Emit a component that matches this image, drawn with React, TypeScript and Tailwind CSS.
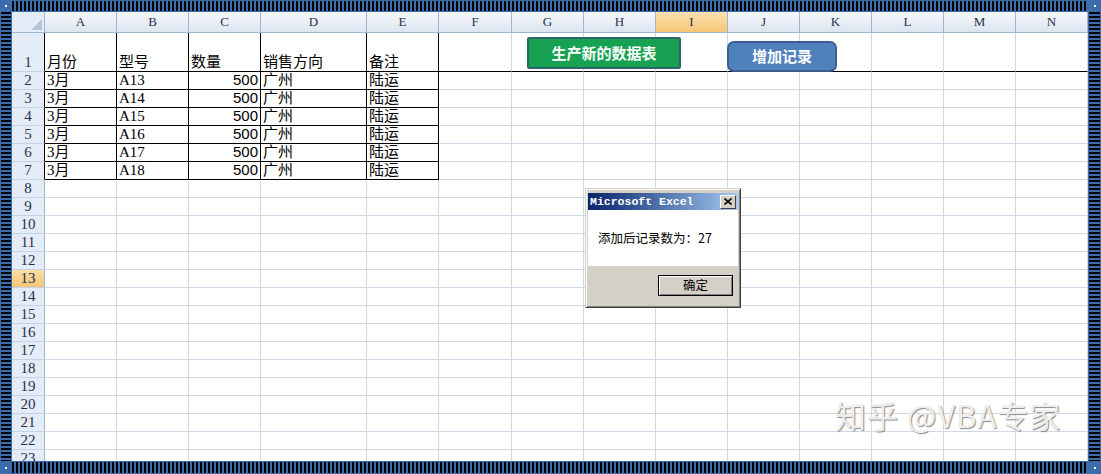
import React from 'react';

const cols = ['A', 'B', 'C', 'D', 'E', 'F', 'G', 'H', 'I', 'J', 'K', 'L', 'M', 'N'];

const data: string[][] = [
  ['月份', '型号', '数量', '销售方向', '备注'],
  ['3月', 'A13', '500', '广州', '陆运'],
  ['3月', 'A14', '500', '广州', '陆运'],
  ['3月', 'A15', '500', '广州', '陆运'],
  ['3月', 'A16', '500', '广州', '陆运'],
  ['3月', 'A17', '500', '广州', '陆运'],
  ['3月', 'A18', '500', '广州', '陆运'],
];

const rowCount = 23;

// frame corners: blue block with a small white dot
const Corner = ({ wide }: { wide?: boolean }) => (
  <div className={`${wide ? 'w-[13px]' : 'w-[12px]'} flex items-center justify-center bg-[#3b6dad]`}>
    <div className="w-[2px] h-[2px] bg-white" />
  </div>
);

const Sheet = () => {
  return (
    <div className="relative flex-1 overflow-hidden bg-white">
      <div className="grid grid-cols-[33px_72px_72px_72px_106px_72px_73px_72px_72px_72px_72px_72px_72px_72px_1fr] grid-rows-[21px_39px_repeat(22,18px)]">
        {/* corner select-all */}
        <div className="relative bg-[#e4ecf7] border-r border-b border-[#9eb6ce]">
          <svg className="absolute right-[2px] bottom-[2px]" width="11" height="11" viewBox="0 0 11 11">
            <polygon points="11,0 11,11 0,11" fill="#b4c6de" />
          </svg>
        </div>
        {/* column headers */}
        {cols.map((c) => (
          <div
            key={c}
            className={`flex items-center justify-center border-r border-b border-[#9eb6ce] text-[13px] text-[#27324a] font-['Liberation_Serif',serif] ${
              c === 'I' ? 'bg-linear-to-b from-[#fbe2b0] to-[#f4c574]' : 'bg-linear-to-b from-[#f7f9fc] to-[#dce4ef]'
            }`}
          >
            {c}
          </div>
        ))}
        {/* rows */}
        {Array.from({ length: rowCount }, (_, i) => i + 1).map((r) => (
          <React.Fragment key={r}>
            <div
              className={`flex items-end justify-center border-r border-b border-b-[#c4d2e5] text-[15px] leading-[18px] text-[#27324a] font-['Liberation_Serif',serif] ${
                r <= 7 ? 'border-r-black' : 'border-r-[#9eb6ce]'
              } ${r === 13 ? 'bg-linear-to-b from-[#fbdea6] to-[#f5c676]' : 'bg-[#e4ecf7]'}`}
            >
              {r}
            </div>
            {cols.map((c, ci) => {
              const inTable = r <= 7 && ci < 5;
              const text = inTable ? data[r - 1][ci] : '';
              const isNum = r > 1 && ci === 2;
              let border = 'border-[#d0d7e5]';
              if (inTable) border = 'border-black';
              else if (r === 1) border = 'border-r-[#d0d7e5] border-b-black';
              return (
                <div
                  key={c}
                  className={`flex items-end overflow-hidden whitespace-nowrap border-r border-b px-[2px] text-[15px] leading-[18px] text-black ${border} ${
                    isNum
                      ? "justify-end font-['Liberation_Sans',sans-serif] text-[14px]"
                      : "font-['Liberation_Serif','Noto_Sans_CJK_SC',serif]"
                  }`}
                >
                  {text}
                </div>
              );
            })}
          </React.Fragment>
        ))}
      </div>

      {/* form buttons drawn over the sheet */}
      <div className="absolute left-[515px] top-[25px] w-[154px] h-[32px] flex items-center justify-center rounded-[2px] border-2 border-[#2f6567] bg-[#17a253] text-white font-bold text-[15px] font-['Noto_Sans_CJK_SC',sans-serif]">
        生产新的数据表
      </div>
      <div className="absolute left-[715px] top-[29px] w-[110px] h-[31px] flex items-center justify-center rounded-[7px] border-2 border-[#3a5f8e] bg-[#4f81bd] text-white font-bold text-[15px] font-['Noto_Sans_CJK_SC',sans-serif]">
        增加记录
      </div>

      {/* message box */}
      <div className="absolute left-[573px] top-[176px] w-[156px] flex flex-col p-[2px] pt-[4px] bg-[#d4d0c8] border border-t-[#d4d0c8] border-l-[#d4d0c8] border-r-[#404040] border-b-[#404040] shadow-[inset_1px_1px_0_#ffffff,inset_-1px_-1px_0_#808080]">
        <div className="h-[17px] flex items-center justify-between pl-[2px] pr-[2px] bg-linear-to-r from-[#0a246a] to-[#a6caf0]">
          <span className="text-white font-bold text-[11.5px] font-['Liberation_Mono',monospace]">Microsoft Excel</span>
          <div className="w-[16px] h-[14px] flex items-center justify-center bg-[#d4d0c8] border border-t-white border-l-white border-r-[#404040] border-b-[#404040]">
            <svg width="8" height="7" viewBox="0 0 8 7">
              <path d="M0.5 0.5 L7.5 6.5 M7.5 0.5 L0.5 6.5" stroke="#000" strokeWidth="1.6" />
            </svg>
          </div>
        </div>
        <div className="h-[56px] flex items-center pl-[10px] bg-white text-[12.5px] text-black font-['Noto_Sans_CJK_SC',sans-serif]">
          添加后记录数为：27
        </div>
        <div className="h-[39px] flex items-center justify-end pr-[5px]">
          <div className="w-[75px] h-[21px] flex items-center justify-center border border-black text-[12.5px] text-black font-['Noto_Sans_CJK_SC',sans-serif] shadow-[inset_1px_1px_0_#ffffff,inset_-1px_-1px_0_#808080]">
            确定
          </div>
        </div>
      </div>

      {/* watermark */}
      <div className="absolute left-[823px] top-[387px] leading-none tracking-[1px] text-[31px] text-[#eeeeee] font-['Noto_Sans_CJK_SC',sans-serif] whitespace-nowrap [text-shadow:1px_1px_1px_#8a8a8a]">
        知乎 @VBA专家
      </div>
    </div>
  );
};

export default function App() {
  return (
    <div className="w-[1101px] h-[474px] flex flex-col overflow-hidden bg-[#3b6dad]">
      <div className="h-[12px] flex">
        <Corner />
        <div className="flex-1 my-[1px] bg-[repeating-linear-gradient(90deg,#000_0px,#000_2px,#3b6dad_2px,#3b6dad_4px)]" />
        <Corner wide />
      </div>
      <div className="flex flex-1 min-h-0">
        <div className="w-[10px] mx-[1px] bg-[repeating-linear-gradient(180deg,#000_0px,#000_2px,#3b6dad_2px,#3b6dad_4px)]" />
        <Sheet />
        <div className="w-[11px] mx-[1px] bg-[repeating-linear-gradient(180deg,#000_0px,#000_2px,#3b6dad_2px,#3b6dad_4px)]" />
      </div>
      <div className="h-[13px] flex">
        <Corner />
        <div className="flex-1 my-[1px] bg-[repeating-linear-gradient(90deg,#000_0px,#000_2px,#3b6dad_2px,#3b6dad_4px)]" />
        <Corner wide />
      </div>
    </div>
  );
}
